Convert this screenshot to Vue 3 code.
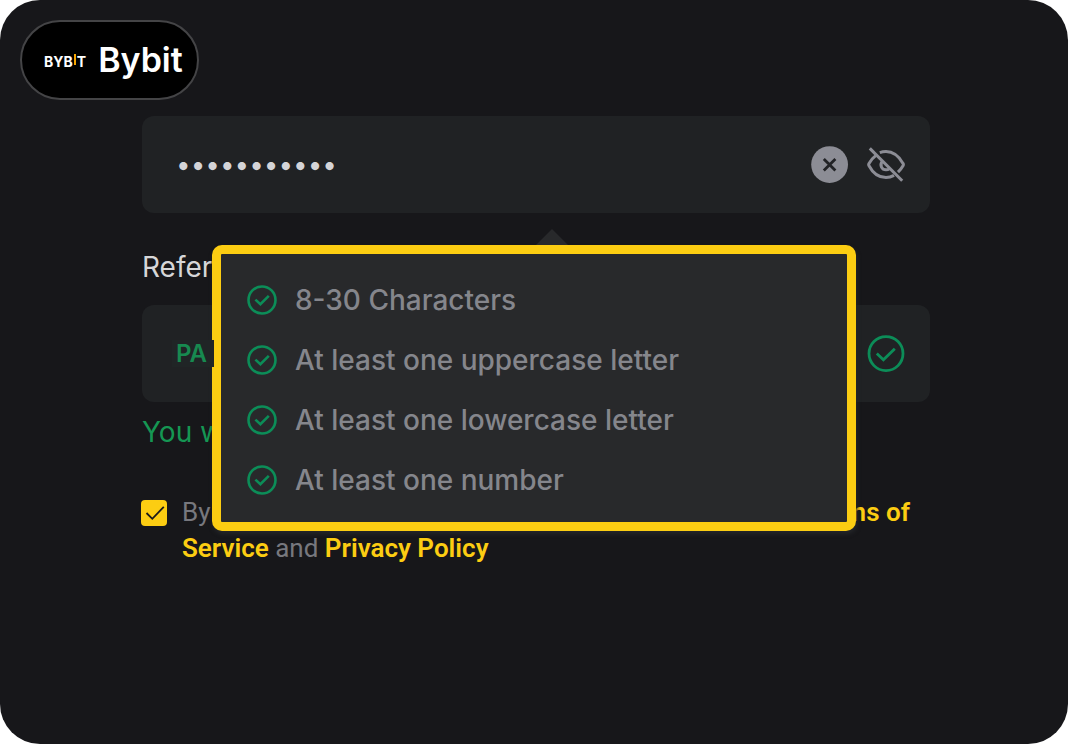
<script setup>
import { ref } from 'vue'

const password = ref('abcdefgh1JK')
const referral = ref('PA')
const agreed = ref(true)
const rules = [
  '8-30 Characters',
  'At least one uppercase letter',
  'At least one lowercase letter',
  'At least one number',
]
</script>

<template>
  <main class="page">
    <header class="brand">
      <span class="logo" aria-hidden="true">BYB<i class="logo-bar"></i>T</span>
      <span class="name">Bybit</span>
    </header>

    <form class="form" @submit.prevent>
      <div class="field-wrap">
        <div class="field">
          <input v-model="password" class="password" type="password" aria-label="Password" autocomplete="off" />
          <button class="icon-button" type="button" aria-label="Clear" @click="password = ''">
            <svg viewBox="0 0 38 38" width="38" height="38">
              <circle cx="18.6" cy="18.6" r="18.4" fill="#8c8d95" />
              <path d="M12.8 13 24.4 24.4M24.4 13 12.8 24.4" stroke="#222326" stroke-width="2.8" />
            </svg>
          </button>
          <button class="icon-button" type="button" aria-label="Show password">
            <svg viewBox="0 0 38 38" width="38" height="38" fill="none" stroke="#8c8d95" stroke-width="3">
              <path d="M12.8 6.6Q15.6 5.6 19 5.6C27 5.6 32.5 11.4 36 17.4Q36.8 18.6 36 19.8 34 23.4 31 26.2" />
              <path d="M9 9.4Q4.8 12.6 2 17.4 1.3 18.6 2 19.8C6 27.4 12 31.6 19 31.6Q23.2 31.6 27 29.4" />
              <path d="M15.3 15.2C12.2 19.4 15 23.8 19 23.8Q21 23.8 22.5 22.6" />
              <path d="M2.8 2.4 35.2 34.8" />
            </svg>
          </button>
        </div>

        <div class="tip" role="status">
          <ul class="rules">
            <li v-for="rule in rules" :key="rule" class="rule">
              <svg viewBox="0 0 30 30" width="30" height="30" fill="none" stroke="#0c8d58" stroke-width="2.6">
                <circle cx="15" cy="15" r="13.5" />
                <path d="M8.4 14.6 13.4 19.2 21.8 10.8" />
              </svg>
              <span>{{ rule }}</span>
            </li>
          </ul>
        </div>
      </div>

      <label class="label" for="referral">Refer</label>
      <div class="field">
        <input id="referral" v-model="referral" class="code" type="text" />
        <svg class="valid" viewBox="0 0 38 38" width="38" height="38" fill="none" stroke="#0c8d58" stroke-width="2.8">
          <circle cx="19" cy="18.6" r="17" />
          <path d="M9.8 18.6 16.4 24.8 27.8 13.8" />
        </svg>
      </div>
      <p class="hint">You w</p>

      <div class="terms">
        <span class="tick">
          <input id="agree" v-model="agreed" type="checkbox" />
          <svg v-if="agreed" viewBox="0 0 26 26" width="26" height="26" fill="none" stroke="#1b1b1b" stroke-width="1.8">
            <path d="M5.5 13 11.3 18.8 22.8 6.8" />
          </svg>
        </span>
        <div class="copy">
          <div class="line"><label for="agree">By</label><a href="#terms">Terms of</a></div>
          <div><a href="#terms">Service</a> and <a href="#privacy">Privacy Policy</a></div>
        </div>
      </div>
    </form>
  </main>
</template>

<style>
body {
  margin: 0;
  background: #fff;
}
</style>

<style scoped>
.page {
  box-sizing: border-box;
  min-height: 100vh;
  padding: 20px 138px 20px 142px;
  border-radius: 40px;
  background: #17171a;
  font-family: Inter, "Liberation Sans", sans-serif;
}
.brand {
  box-sizing: border-box;
  display: flex;
  align-items: center;
  gap: 12px;
  width: max-content;
  height: 80px;
  margin-left: -122px;
  padding: 0 14px 0 22px;
  border: 2px solid #444446;
  border-radius: 40px;
  background: #000;
  color: #fff;
}
.logo {
  display: flex;
  align-items: center;
  padding-top: 4px;
  font-size: 14px;
  font-weight: 700;
  line-height: 20px;
}
.logo-bar {
  width: 2px;
  height: 11px;
  margin: 0 1px 6px;
  background: #f7a600;
}
.name {
  font-size: 34px;
  font-weight: 600;
  line-height: 40px;
}
.form {
  margin-top: 16px;
}
.field-wrap {
  position: relative;
}
.field {
  box-sizing: border-box;
  display: flex;
  align-items: center;
  gap: 18px;
  height: 97px;
  padding: 0 25px 0 34px;
  border-radius: 12px;
  background: #202224;
}
input {
  margin: 0;
  padding: 0;
  border: 0;
  outline: 0;
  background: transparent;
  font-family: inherit;
}
.password {
  flex: 1;
  min-width: 0;
  height: 48px;
  color: #d4d4d7;
  font-size: 26px;
}
.icon-button {
  display: flex;
  padding: 0;
  border: 0;
  background: none;
}
.tip {
  position: absolute;
  top: 129px;
  right: 74px;
  left: 70px;
  border: 9px solid #fccd12;
  border-radius: 10px;
  background: #28292b;
  box-shadow: 1px 3px 4px #242629;
}
.tip::before {
  content: "";
  position: absolute;
  bottom: calc(100% + 9px);
  left: 315px;
  width: 32px;
  height: 16px;
  background: #28292b;
  clip-path: polygon(50% 0, 100% 100%, 0 100%);
}
.rules {
  margin: 0;
  padding: 16px 26px 12px;
  list-style: none;
}
.rule {
  display: flex;
  align-items: center;
  gap: 18px;
  height: 60px;
  color: #85868c;
  font-size: 28px;
  font-weight: 500;
}
.label {
  display: block;
  margin-top: 36px;
  margin-bottom: 20px;
  color: #d6d6d8;
  font-size: 28px;
  line-height: 36px;
}
.code {
  position: relative;
  z-index: 1;
  box-sizing: border-box;
  width: 42px;
  height: 27px;
  margin-left: -4px;
  padding-left: 4px;
  background: #202526;
  color: #178a50;
  font-size: 24px;
  font-weight: 600;
}
.valid {
  margin-left: auto;
}
.hint {
  margin: 12px 0 0;
  color: #159653;
  font-size: 28px;
  line-height: 36px;
}
.terms {
  display: flex;
  align-items: flex-start;
  gap: 15px;
  margin-top: 44px;
  color: #77787e;
  font-family: Roboto, sans-serif;
  font-size: 26px;
  line-height: 36px;
}
.tick {
  display: grid;
  margin-top: 6px;
  margin-left: -1px;
}
.tick > * {
  grid-area: 1 / 1;
}
.tick input {
  width: 26px;
  height: 26px;
  border-radius: 4px;
  background: #fccd12;
  appearance: none;
}
.tick svg {
  pointer-events: none;
}
.copy {
  flex: 1;
  margin-right: 20px;
}
.line {
  display: flex;
  justify-content: space-between;
}
a {
  color: #fccd12;
  font-weight: 600;
  text-decoration: none;
}
</style>
